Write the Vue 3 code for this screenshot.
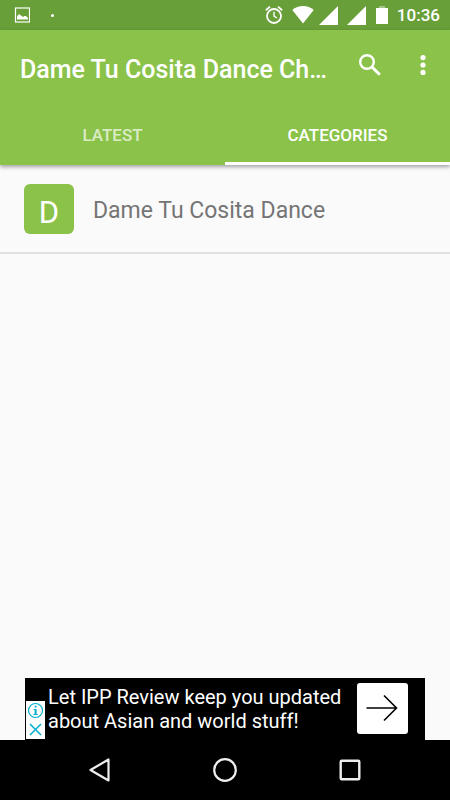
<script setup>
import { ref } from 'vue';

const tabs = ['Latest', 'Categories'];
const activeTab = ref('Categories');

const categories = [{ id: 1, name: 'Dame Tu Cosita Dance' }];

const showAd = ref(true);
</script>

<template>
  <div class="screen">
    <div class="status-bar">
      <div class="notifications">
        <svg width="16" height="16" viewBox="0 0 16 16">
          <rect x="1.5" y="1" width="14" height="14" fill="none" stroke="#fff" stroke-width="1.2" />
          <path d="M3 12.5V9.5L5 7L7 8.5L9 10L10.5 9L12 9L14 11V12.5Z" fill="#fff" />
        </svg>
        <span class="dot"></span>
      </div>
      <div class="system">
        <svg class="alarm" width="18" height="20" viewBox="0 0 18 20">
          <g fill="none" stroke="#fff">
            <circle cx="9" cy="11" r="7" stroke-width="1.8" />
            <path d="M9 6.8V11.2L12 13" stroke-width="1.4" />
            <path d="M0.8 5.2L5 1.6M17.2 5.2L13 1.6" stroke-width="1.8" />
          </g>
        </svg>
        <svg class="wifi" width="22" height="18" viewBox="0 0 22 18">
          <path d="M0.3 4C3.2 1.4 7 0 11 0S18.8 1.4 21.7 4L11 17.6Z" fill="#fff" />
        </svg>
        <svg class="signal" width="19" height="19" viewBox="0 0 19 19">
          <path d="M19 0V19H0Z" fill="#fff" />
        </svg>
        <svg class="signal" width="19" height="19" viewBox="0 0 19 19">
          <path d="M19 0V19H0Z" fill="#fff" />
        </svg>
        <svg class="battery" width="12" height="18" viewBox="0 0 12 18">
          <path d="M3 0H9V2H3Z" fill="#fff" opacity="0.4" />
          <path d="M0 2H12V18H0Z" fill="#fff" />
        </svg>
        <span class="clock">10:36</span>
      </div>
    </div>

    <header class="header">
      <div class="toolbar">
        <h1 class="title">Dame Tu Cosita Dance Ch…</h1>
        <button class="icon-button search" aria-label="Search">
          <svg width="22" height="22" viewBox="0 0 22 22">
            <circle cx="8" cy="8" r="6.8" fill="none" stroke="#fff" stroke-width="2.4" />
            <path d="M12.5 12.5L20.8 20.8" stroke="#fff" stroke-width="3" />
          </svg>
        </button>
        <button class="icon-button more" aria-label="More options">
          <svg width="6" height="20" viewBox="0 0 6 20">
            <g fill="#fff">
              <circle cx="3" cy="2.6" r="2.6" />
              <circle cx="3" cy="10" r="2.6" />
              <circle cx="3" cy="17.4" r="2.6" />
            </g>
          </svg>
        </button>
      </div>
      <nav class="tabs">
        <button
          v-for="tab in tabs"
          :key="tab"
          class="tab"
          :class="{ active: tab === activeTab }"
          @click="activeTab = tab"
        >
          {{ tab }}
        </button>
      </nav>
    </header>

    <main class="content">
      <ul class="list">
        <li v-for="category in categories" :key="category.id" class="row">
          <span class="badge">{{ category.name.charAt(0) }}</span>
          <span class="name">{{ category.name }}</span>
        </li>
      </ul>
    </main>

    <aside v-if="showAd" class="ad">
      <p class="ad-text">Let IPP Review keep you updated about Asian and world stuff!</p>
      <button class="ad-open" aria-label="Open ad">
        <svg width="34" height="28" viewBox="0 0 34 28">
          <path d="M0.5 14H30M18 1.5L30.5 14L18 26.5" fill="none" stroke="#000" stroke-width="1.6" />
        </svg>
      </button>
      <div class="ad-choices">
        <button class="ad-choice" aria-label="Ad info">
          <svg width="17" height="17" viewBox="0 0 17 17">
            <circle cx="8.5" cy="8.5" r="7" fill="none" stroke="#00aecd" stroke-width="1.2" />
            <path d="M7.6 3.8H9.6V5.6H7.6ZM6.5 7H9.6V12H10.8V13H6.4V12H7.6V8H6.5Z" fill="#00aecd" />
          </svg>
        </button>
        <button class="ad-choice" aria-label="Close ad" @click="showAd = false">
          <svg width="17" height="17" viewBox="0 0 17 17">
            <path d="M3 3L14 14M14 3L3 14" stroke="#00aecd" stroke-width="1.5" />
          </svg>
        </button>
      </div>
    </aside>

    <footer class="nav-bar">
      <button class="nav-button" aria-label="Back">
        <svg width="24" height="26" viewBox="0 0 24 26">
          <path d="M20.5 2.5V23.5L2.5 13Z" fill="none" stroke="#eee" stroke-width="2.2" stroke-linejoin="round" />
        </svg>
      </button>
      <button class="nav-button" aria-label="Home">
        <svg width="26" height="26" viewBox="0 0 26 26">
          <circle cx="13" cy="13" r="10.8" fill="none" stroke="#eee" stroke-width="2.2" />
        </svg>
      </button>
      <button class="nav-button" aria-label="Recent apps">
        <svg width="24" height="26" viewBox="0 0 24 26">
          <rect x="2.7" y="3.7" width="18.6" height="18.6" rx="1" fill="none" stroke="#eee" stroke-width="2.4" />
        </svg>
      </button>
    </footer>
  </div>
</template>

<style>
body {
  margin: 0;
  background-color: #fafafa;
}
</style>

<style scoped>
.screen {
  display: flex;
  flex-direction: column;
  min-height: 100vh;
  font-family: Roboto, 'Liberation Sans', sans-serif;
  background-color: #fafafa;
}

button {
  display: flex;
  align-items: center;
  justify-content: center;
  padding: 0;
  border: none;
  background: none;
  font-family: inherit;
  cursor: pointer;
}

svg {
  display: block;
}

.status-bar {
  display: flex;
  align-items: center;
  justify-content: space-between;
  height: 30px;
  padding: 0 10px 0 14px;
  background-color: #689f38;
}

.notifications,
.system {
  display: flex;
  align-items: center;
}

.dot {
  width: 3px;
  height: 3px;
  margin-left: 21px;
  border-radius: 50%;
  background-color: #fff;
}

.wifi {
  margin-left: 9px;
}

.signal {
  margin-left: 5px;
}

.signal + .signal {
  margin-left: 9px;
}

.battery {
  margin-left: 10px;
}

.clock {
  margin-left: 9px;
  font-size: 17px;
  font-weight: 500;
  line-height: 30px;
  color: #fff;
}

.header {
  position: relative;
  background-color: #8bc34a;
  box-shadow: 0 2px 4px rgba(0, 0, 0, 0.35);
}

.toolbar {
  display: flex;
  align-items: center;
  height: 75px;
  padding: 0 14px 0 20px;
}

.title {
  flex: 1;
  margin: 0;
  padding-top: 4px;
  font-size: 25px;
  font-weight: 500;
  line-height: 32px;
  white-space: nowrap;
  color: #fff;
}

.icon-button {
  height: 40px;
  margin-bottom: 5px;
}

.search {
  width: 40px;
}

.more {
  width: 26px;
  margin-left: 20px;
}

.tabs {
  display: flex;
}

.tab {
  flex: 1;
  height: 60px;
  border-top: 3px solid transparent;
  border-bottom: 3px solid transparent;
  font-size: 17px;
  font-weight: 500;
  text-transform: uppercase;
  color: rgba(255, 255, 255, 0.7);
}

.tab.active {
  border-bottom-color: #fff;
  color: #fff;
}

.content {
  flex: 1;
}

.list {
  margin: 0;
  padding: 0;
  list-style: none;
}

.row {
  display: flex;
  align-items: center;
  gap: 19px;
  padding: 19px 24px 18px;
  border-bottom: 2px solid #e0e0e0;
}

.badge {
  width: 50px;
  height: 50px;
  border-radius: 6px;
  background-color: #8bc34a;
  font-size: 31px;
  line-height: 58px;
  text-align: center;
  color: #fff;
}

.name {
  padding-top: 4px;
  font-size: 23px;
  line-height: 30px;
  color: #757575;
}

.ad {
  position: relative;
  display: flex;
  align-items: center;
  justify-content: space-between;
  height: 62px;
  margin: 0 25px;
  padding: 0 17px 0 23px;
  background-color: #000;
}

.ad-text {
  width: 300px;
  margin: 0;
  font-size: 20px;
  line-height: 24px;
  color: #fff;
}

.ad-open {
  width: 51px;
  height: 51px;
  margin-bottom: 2px;
  border-radius: 3px;
  background-color: #fff;
}

.ad-choices {
  position: absolute;
  left: 1px;
  bottom: 1px;
  background-color: #fff;
}

.ad-choice {
  width: 19px;
  height: 19px;
}

.nav-bar {
  display: flex;
  align-items: center;
  justify-content: center;
  gap: 75px;
  height: 60px;
  background-color: #000;
}

.nav-button {
  width: 50px;
  height: 50px;
}
</style>
